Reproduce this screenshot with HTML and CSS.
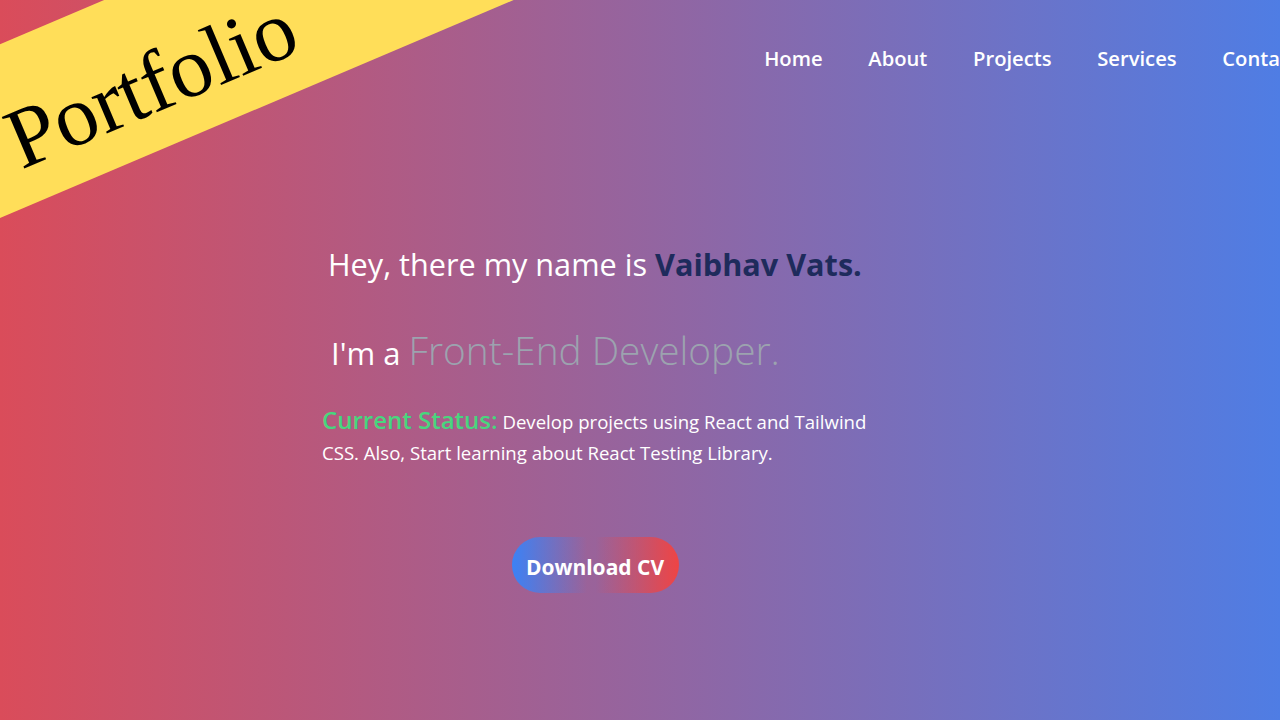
FILE: index.html
```html
<!DOCTYPE html>
<html lang="en">
<head>
<meta charset="utf-8">
<title>Portfolio</title>
<link rel="stylesheet" href="styles.css">
</head>
<body>
<div class="page">
  <div class="ribbon"><span class="ribbon-text">Portfolio</span></div>
  <header class="nav">
    <a class="logo" href="#">VV</a>
    <ul class="menu">
      <li><a href="#">Home</a></li>
      <li><a href="#">About</a></li>
      <li><a href="#">Projects</a></li>
      <li><a href="#">Services</a></li>
      <li><a href="#">Contact</a></li>
    </ul>
  </header>
  <main class="hero">
    <h1 class="greet">Hey, there my name is <strong class="name">Vaibhav Vats.</strong></h1>
    <h2 class="role">I'm a <span class="role-typed">Front-End Developer.</span></h2>
    <p class="status"><span class="status-label">Current Status:</span> Develop projects using React and Tailwind CSS. Also, Start learning about React Testing Library.</p>
    <div class="actions"><a class="cv" href="#">Download CV</a></div>
  </main>
</div>
</body>
</html>
```
FILE: styles.css
```css
* { box-sizing: border-box; }
html, body { margin: 0; padding: 0; }
body {
  font-family: "Open Sans", "Noto Sans", sans-serif;
  color: #fff;
  overflow: hidden;
}
.page {
  position: relative;
  width: 1280px;
  height: 720px;
  overflow: hidden;
  background: linear-gradient(to right, #da4c5a, #4f7de4);
}
.ribbon {
  position: absolute;
  left: -200px;
  top: 136px;
  width: 1000px;
  height: 160px;
  background: #ffde59;
  transform-origin: 0 50%;
  transform: rotate(-23deg);
  padding: 52px 0 0 222px;
  z-index: 5;
}
.ribbon-text {
  display: block;
  font-family: "Liberation Serif", "Times New Roman", serif;
  font-size: 86px;
  line-height: 1;
  color: #000;
}
.nav {
  display: flex;
  align-items: center;
  padding-top: 43px;
  white-space: nowrap;
}
.logo {
  color: #fff;
  text-decoration: none;
  font-weight: 700;
  font-size: 24px;
  line-height: 30px;
}
.menu {
  display: flex;
  gap: 45.7px;
  list-style: none;
  margin: 0 0 0 733px;
  padding: 0;
}
.menu a {
  color: #fff;
  text-decoration: none;
  font-weight: 600;
  font-size: 20.2px;
  line-height: 30px;
}
.hero {
  padding: 171px 0 0 322px;
  width: 900px;
}
.greet {
  margin: 0 0 0 6px;
  font-size: 30.65px;
  font-weight: 400;
  line-height: 40px;
}
.name {
  color: #1e2b5c;
  font-weight: 700;
}
.role {
  margin: 42px 0 0 9px;
  font-size: 31px;
  font-weight: 400;
  line-height: 48px;
}
.role-typed {
  color: #9ca3af;
  font-size: 38.8px;
  font-weight: 300;
}
.status {
  margin: 27px 0 0 0;
  width: 560px;
  font-size: 18.6px;
  line-height: 31px;
}
.status-label {
  color: #48d67e;
  font-size: 24px;
  font-weight: 600;
}
.actions {
  display: flex;
  width: 546px;
  justify-content: center;
  margin-top: 69px;
}
.cv {
  display: flex;
  align-items: center;
  justify-content: center;
  width: 167px;
  height: 56px;
  padding-top: 3px;
  border-radius: 28px;
  background: linear-gradient(to right, #3b82f6, rgba(59,130,246,0) 45%, rgba(239,68,68,0) 50%, #ef4444);
  color: #fff;
  text-decoration: none;
  font-weight: 700;
  font-size: 21px;
}
```
